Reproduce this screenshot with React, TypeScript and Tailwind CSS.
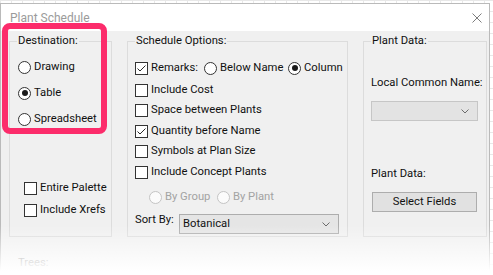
import React from 'react';

const font = "font-['Roboto','Liberation_Sans',sans-serif] text-[11.25px]";

// Small Windows-style checkbox with optional tick
const Check: React.FC<{ checked?: boolean; label: string; className?: string }> = ({ checked, label, className }) => (
  <div className={`flex items-center gap-[3px] ${className ?? ''}`}>
    <span className="w-[13px] h-[13px] border border-[#333333] bg-white flex items-center justify-center shrink-0">
      {checked && (
        <svg width="11" height="11" viewBox="0 0 11 11">
          <polyline points="1.5,5.5 4,8 9.5,2.5" fill="none" stroke="#2b2b2b" strokeWidth="1" />
        </svg>
      )}
    </span>
    <span className="whitespace-nowrap">{label}</span>
  </div>
);

const Radio: React.FC<{ checked?: boolean; disabled?: boolean; label: string; className?: string }> = ({
  checked,
  disabled,
  label,
  className,
}) => (
  <div className={`flex items-center gap-[3px] ${className ?? ''}`}>
    <span
      className={`w-[13px] h-[13px] rounded-full border flex items-center justify-center shrink-0 ${
        disabled ? 'border-[#c4c4c4] bg-[#fbfbfb]' : 'border-[#333333] bg-white'
      }`}
    >
      {checked && <span className="w-[6px] h-[6px] rounded-full bg-[#1a1a1a]" />}
    </span>
    <span className={`whitespace-nowrap ${disabled ? 'text-[#a3a3a3]' : ''}`}>{label}</span>
  </div>
);

const Chevron: React.FC = () => (
  <svg width="8" height="5" viewBox="0 0 8 5">
    <polyline points="0.5,0.5 4,4 7.5,0.5" fill="none" stroke="#6b6b6b" strokeWidth="1" />
  </svg>
);

const Group: React.FC<{ title: string; className: string; children: React.ReactNode }> = ({ title, className, children }) => (
  <fieldset className={`border border-[#dcdcdc] pl-[7px] flex flex-col h-[204px] ${className}`}>
    <legend className="px-[1px] leading-[16px]">{title}</legend>
    {children}
  </fieldset>
);

export default function App() {
  return (
    <div
      className={`relative w-[493px] h-[275px] overflow-hidden bg-white bg-[linear-gradient(to_right,#e8e8e8_1px,transparent_1px),linear-gradient(to_bottom,#e8e8e8_1px,transparent_1px)] bg-[length:11px_11px] pt-[3px] text-[#111111] ${font}`}
    >
      <div className="w-[490px] h-[272px] border-l border-t border-r border-[#bababa] flex flex-col">
        {/* Title bar */}
        <div className="h-[27px] bg-white flex items-center justify-between pl-[9px] pr-[7px] shrink-0">
          <span className="text-[12px] text-[#9b9b9b]">Plant Schedule</span>
          <svg width="10" height="10" viewBox="0 0 10 10">
            <path d="M0.5 0.5 L9.5 9.5 M9.5 0.5 L0.5 9.5" stroke="#7d7d7d" strokeWidth="1" />
          </svg>
        </div>

        {/* Body */}
        <div className="flex-1 bg-[#f0f0f0] pt-[2px] pl-[8px] flex flex-col">
          <div className="flex gap-[15px] items-start">
            <Group title="Destination:" className="w-[103px]">
              <div className="mt-[5px] ml-[1px] flex flex-col">
                <Radio label="Drawing" className="h-[26px]" />
                <Radio label="Table" checked className="h-[26px]" />
                <Radio label="Spreadsheet" className="h-[26px]" />
              </div>
              <div className="mt-auto pb-[15px] ml-[7px] flex flex-col">
                <Check label="Entire Palette" className="h-[22px]" />
                <Check label="Include Xrefs" className="h-[22px]" />
              </div>
            </Group>

            <Group title="Schedule Options:" className="w-[221px]">
              <div className="mt-[7px] h-[24px] flex items-center">
                <Check label="Remarks:" checked className="w-[69px]" />
                <Radio label="Below Name" className="w-[84px]" />
                <Radio label="Column" checked />
              </div>
              <Check label="Include Cost" className="h-[20.5px]" />
              <Check label="Space between Plants" className="h-[20.5px]" />
              <Check label="Quantity before Name" checked className="h-[20.5px]" />
              <Check label="Symbols at Plan Size" className="h-[20.5px]" />
              <Check label="Include Concept Plants" className="h-[20.5px]" />
              <div className="mt-[3.5px] h-[22px] flex items-center pl-[14px]">
                <Radio label="By Group" disabled className="w-[68px]" />
                <Radio label="By Plant" disabled />
              </div>
              <div className="mt-[6px] flex items-start">
                <span className="w-[44px] leading-[16px] -mt-[2px]">Sort By:</span>
                <div className="w-[160px] h-[20px] border border-[#adadad] bg-[#e5e5e5] flex items-center justify-between pl-[3px] pr-[8px]">
                  <span>Botanical</span>
                  <Chevron />
                </div>
              </div>
            </Group>

            <Group title="Plant Data:" className="w-[124px]">
              <span className="mt-[26px] leading-[16px] whitespace-nowrap">Local Common Name:</span>
              <div className="mt-[10px] w-[107px] h-[20px] border border-[#c6c6c6] bg-[#e3e3e3] flex items-center justify-end pr-[8px]">
                <Chevron />
              </div>
              <span className="mt-[45px] leading-[16px]">Plant Data:</span>
              <div className="mt-[10px] ml-[1px] w-[105px] h-[20px] border border-[#adadad] bg-[#e1e1e1] flex items-center justify-center">
                Select Fields
              </div>
            </Group>
          </div>
          <span className="mt-[18px] pl-[9px] leading-[16px] text-[#777777]">Trees:</span>
        </div>
      </div>

      {/* fade at the bottom of the capture */}
      <div className="absolute left-0 right-0 bottom-0 h-[50px] bg-[linear-gradient(to_bottom,rgba(255,255,255,0)_0%,#ffffff_92%)]" />

      {/* pink annotation box */}
      <div className="absolute left-[2px] top-[23px] w-[105px] h-[111px] border-[6px] border-[#fc2c6b] rounded-[8px]" />
    </div>
  );
}
